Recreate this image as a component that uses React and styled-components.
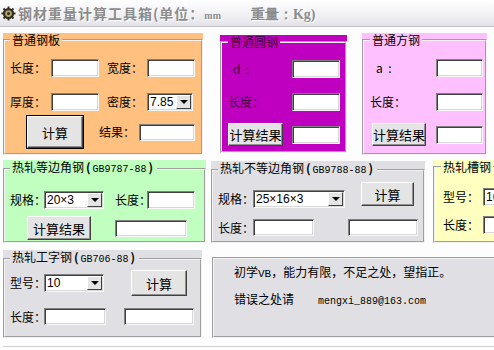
import styled, { createGlobalStyle, css } from "styled-components";

const GlobalStyle = createGlobalStyle`
  html, body { margin: 0; padding: 0; background: #fff; }
  body {
    font-family: "Noto Sans CJK SC", "Liberation Sans", sans-serif;
    font-size: 12px;
    color: #000;
  }
  * { box-sizing: border-box; }
`;

const Window = styled.div`
  width: 494px;
  height: 350px;
  overflow: hidden;
  background: #fdfdfd;
  display: flex;
  flex-direction: column;
`;

const TitleBar = styled.div`
  flex: none;
  height: 27px;
  display: flex;
  align-items: center;
  gap: 2px;
  padding-left: 1px;
  background: linear-gradient(#ffffff, #f0f0f4 60%, #e2e2e8);
  border-bottom: 1px solid #c4c4c8;
`;

const Title = styled.div`
  font-size: 14px;
  font-weight: bold;
  letter-spacing: 1px;
  color: #8c8c8c;
  white-space: nowrap;
  text-shadow: 1px 1px 0 #fff;
`;

const Unit = styled.span`
  font-family: "Liberation Serif", serif;
  font-size: ${(p) => p.$size || 14}px;
  letter-spacing: 0;
  margin-left: ${(p) => p.$ml || 0}px;
`;

const Body = styled.div`
  display: flex;
  flex-direction: column;
  padding-left: 3px;
`;

const PanelRow = styled.div`
  flex: none;
  display: flex;
  align-items: flex-start;
  margin-top: ${(p) => p.$top}px;
  height: ${(p) => p.$h}px;
`;

const Panel = styled.div`
  flex: none;
  width: ${(p) => p.$w}px;
  height: ${(p) => p.$h}px;
  margin-left: ${(p) => p.$left || 0}px;
  margin-top: ${(p) => p.$dy || 0}px;
  background: ${(p) => p.$bg};
`;

const Frame = styled.fieldset`
  margin: 0;
  min-width: 0;
  height: 100%;
  padding: 0 4px 0 ${(p) => p.$pl ?? 5}px;
  border: 2px groove #f2f2f2;
  display: flex;
  flex-direction: column;
  color: ${(p) => p.$ink || "#000"};
`;

const Legend = styled.legend`
  padding: 0 2px;
  margin-left: 0;
  font-size: 12px;
  line-height: 14px;
  white-space: nowrap;
`;

const Std = styled.span`
  font-family: "Liberation Mono", monospace;
  font-size: 10px;
`;

const Bracket = styled.span`
  font-weight: bold;
  margin: 0 2px;
`;

const Row = styled.div`
  flex: none;
  display: flex;
  align-items: ${(p) => p.$align || "center"};
  margin-top: ${(p) => p.$top || 0}px;
  height: ${(p) => p.$h}px;
`;

const Label = styled.span`
  flex: none;
  width: ${(p) => p.$w}px;
  margin-left: ${(p) => p.$ml || 0}px;
  padding-left: ${(p) => p.$indent || 0}px;
  line-height: 18px;
  white-space: nowrap;
`;

const TextBox = styled.div`
  flex: none;
  width: ${(p) => p.$w}px;
  height: ${(p) => p.$h || 18}px;
  margin-left: ${(p) => p.$ml || 0}px;
  background: #fff;
  border: 1px solid;
  border-color: #808080 #f8f8f8 #f8f8f8 #808080;
  box-shadow: inset 1px 1px 0 #404040, inset -1px -1px 0 #d8d8d8;
`;

const Combo = styled(TextBox)`
  display: flex;
  align-items: center;
  justify-content: space-between;
  padding: 0 1px 0 2px;
  font-family: "Liberation Sans", "Noto Sans CJK SC", sans-serif;
  font-size: 12px;
  color: #000;
  overflow: hidden;
`;

const DropBtn = styled.span`
  flex: none;
  width: 15px;
  height: 14px;
  background: #e4e4e4;
  border: 1px solid;
  border-color: #fff #404040 #404040 #fff;
  display: flex;
  align-items: center;
  justify-content: center;

  &::after {
    content: "";
    border-left: 4px solid transparent;
    border-right: 4px solid transparent;
    border-top: 4px solid #000;
  }
`;

const Button = styled.div`
  flex: none;
  width: ${(p) => p.$w}px;
  height: ${(p) => p.$h}px;
  margin-left: ${(p) => p.$ml || 0}px;
  margin-bottom: ${(p) => p.$mb || 0}px;
  display: flex;
  align-items: center;
  justify-content: center;
  font-size: 13px;
  color: #000;
  background: #e4e4e4;
  border: 1px solid;
  border-color: #fff #404040 #404040 #fff;
  box-shadow: inset -1px -1px 0 #909090;

  ${(p) =>
    p.$default &&
    css`
      outline: 1px solid #000;
    `}
`;

const Note = styled.div`
  flex: none;
  width: ${(p) => p.$w}px;
  height: ${(p) => p.$h}px;
  margin-left: ${(p) => p.$left}px;
  margin-top: ${(p) => p.$dy}px;
  background: #e0e0e4;
  border: 2px groove #f2f2f2;
  padding: 5px 0 0 20px;
  display: flex;
  flex-direction: column;
  gap: 9px;
`;

const NoteLine = styled.div`
  line-height: 16px;
  white-space: nowrap;
`;

const Mono = styled.span`
  font-family: "Liberation Mono", monospace;
  font-size: ${(p) => p.$size || 10}px;
  margin-left: ${(p) => p.$ml || 0}px;
`;

const Footer = styled.div`
  flex: none;
  margin-top: 8px;
  border-top: 1px solid #cfcfd4;
  height: 4px;
`;

function GearIcon() {
  const teeth = Array.from({ length: 8 }, (_, i) => i * 45);
  return (
    <svg width="15" height="15" viewBox="0 0 16 16">
      {teeth.map((a) => (
        <rect key={a} x="7" y="0.5" width="2" height="3" fill="#2e2e22" transform={`rotate(${a} 8 8)`} />
      ))}
      <circle cx="8" cy="8" r="6" fill="#2e2e22" />
      <circle cx="8" cy="8" r="3.6" fill="#b8a060" />
      <circle cx="8" cy="8" r="1.6" fill="#2e2e22" />
    </svg>
  );
}

export default function App() {
  return (
    <Window>
      <GlobalStyle />
      <TitleBar>
        <GearIcon />
        <Title>
          钢材重量计算工具箱(单位：<Unit $size={10}>mm</Unit>
          <Unit $ml={30}>重量：Kg)</Unit>
        </Title>
      </TitleBar>

      <Body>
        <PanelRow $top={6} $h={122}>
          <Panel $w={200} $h={122} $bg="#ffc080">
            <Frame>
              <Legend>普通钢板</Legend>
              <Row $top={12} $h={18}>
                <Label $w={41}>长度：</Label>
                <TextBox $w={48} />
                <Label $w={40} $ml={8}>宽度：</Label>
                <TextBox $w={48} />
              </Row>
              <Row $top={16} $h={18}>
                <Label $w={41}>厚度：</Label>
                <TextBox $w={48} />
                <Label $w={40} $ml={8}>密度：</Label>
                <Combo $w={46}>
                  7.85
                  <DropBtn />
                </Combo>
              </Row>
              <Row $top={5} $h={32}>
                <Button $w={56} $h={32} $ml={17} $default>计算</Button>
                <Label $w={40} $ml={16}>结果：</Label>
                <TextBox $w={56} $h={17} />
              </Row>
            </Frame>
          </Panel>

          <Panel $w={127} $h={118} $left={17} $dy={2} $bg="#c000c0">
            <Frame $pl={6} $ink="#3c003c">
              <Legend>普通圆钢</Legend>
              <Row $top={11} $h={18}>
                <Label $w={64} $indent={5}>d&nbsp;&nbsp;:</Label>
                <TextBox $w={48} />
              </Row>
              <Row $top={15} $h={18}>
                <Label $w={64}>长度：</Label>
                <TextBox $w={48} />
              </Row>
              <Row $top={12} $h={23}>
                <Button $w={55} $h={23}>计算结果</Button>
                <TextBox $w={48} $ml={9} />
              </Row>
            </Frame>
          </Panel>

          <Panel $w={125} $h={122} $left={15} $bg="#ffc0ff">
            <Frame $pl={6}>
              <Legend>普通方钢</Legend>
              <Row $top={12} $h={18}>
                <Label $w={66} $indent={6}>a&nbsp;&nbsp;:</Label>
                <TextBox $w={47} />
              </Row>
              <Row $top={16} $h={18}>
                <Label $w={66}>长度：</Label>
                <TextBox $w={47} />
              </Row>
              <Row $top={12} $h={23}>
                <Button $w={54} $h={23} $ml={2}>计算结果</Button>
                <TextBox $w={47} $ml={10} />
              </Row>
            </Frame>
          </Panel>
        </PanelRow>

        <PanelRow $top={5} $h={83}>
          <Panel $w={203} $h={83} $bg="#c0ffc0">
            <Frame>
              <Legend>
                热轧等边角钢<Bracket>(</Bracket>
                <Std>GB9787-88</Std>
                <Bracket>)</Bracket>
              </Legend>
              <Row $top={14} $h={18}>
                <Label $w={34}>规格：</Label>
                <Combo $w={60}>
                  20×3
                  <DropBtn />
                </Combo>
                <Label $w={32} $ml={11}>长度：</Label>
                <TextBox $w={48} />
              </Row>
              <Row $top={7} $h={24}>
                <Button $w={64} $h={24} $ml={17}>计算结果</Button>
                <TextBox $w={72} $h={17} $ml={24} />
              </Row>
            </Frame>
          </Panel>

          <Panel $w={214} $h={82} $left={5} $dy={1} $bg="#e0e0e4">
            <Frame>
              <Legend>
                热轧不等边角钢<Bracket>(</Bracket>
                <Std>GB9788-88</Std>
                <Bracket>)</Bracket>
              </Legend>
              <Row $top={4} $h={26} $align="flex-end">
                <Label $w={35}>规格：</Label>
                <Combo $w={92}>
                  25×16×3
                  <DropBtn />
                </Combo>
                <Button $w={53} $h={24} $ml={16} $mb={2}>计算</Button>
              </Row>
              <Row $top={11} $h={17}>
                <Label $w={35}>长度：</Label>
                <TextBox $w={61} $h={17} />
                <TextBox $w={70} $h={17} $ml={34} />
              </Row>
            </Frame>
          </Panel>

          <Panel $w={80} $h={83} $left={8} $bg="#ffffc0">
            <Frame $pl={6}>
              <Legend>热轧槽钢</Legend>
              <Row $top={14} $h={18}>
                <Label $w={42} $indent={2}>型号：</Label>
                <Combo $w={60}>16</Combo>
              </Row>
              <Row $top={10} $h={18}>
                <Label $w={42} $indent={2}>长度：</Label>
                <TextBox $w={60} />
              </Row>
            </Frame>
          </Panel>
        </PanelRow>

        <PanelRow $top={7} $h={88}>
          <Panel $w={199} $h={88} $bg="#e0e0e4">
            <Frame>
              <Legend>
                热轧工字钢<Bracket>(</Bracket>
                <Std>GB706-88</Std>
                <Bracket>)</Bracket>
              </Legend>
              <Row $top={3} $h={26}>
                <Label $w={34}>型号：</Label>
                <Combo $w={60}>
                  10
                  <DropBtn />
                </Combo>
                <Button $w={56} $h={26} $ml={27}>计算</Button>
              </Row>
              <Row $top={12} $h={17}>
                <Label $w={34}>长度：</Label>
                <TextBox $w={62} $h={17} />
                <TextBox $w={70} $h={17} $ml={18} />
              </Row>
            </Frame>
          </Panel>

          <Note $w={290} $h={81} $left={10} $dy={7}>
            <NoteLine>
              初学<Mono $size={11}>VB</Mono>，能力有限，不足之处，望指正。
            </NoteLine>
            <NoteLine>
              错误之处请<Mono $ml={24}>mengxi_889@163.com</Mono>
            </NoteLine>
          </Note>
        </PanelRow>
        <Footer />
      </Body>
    </Window>
  );
}
